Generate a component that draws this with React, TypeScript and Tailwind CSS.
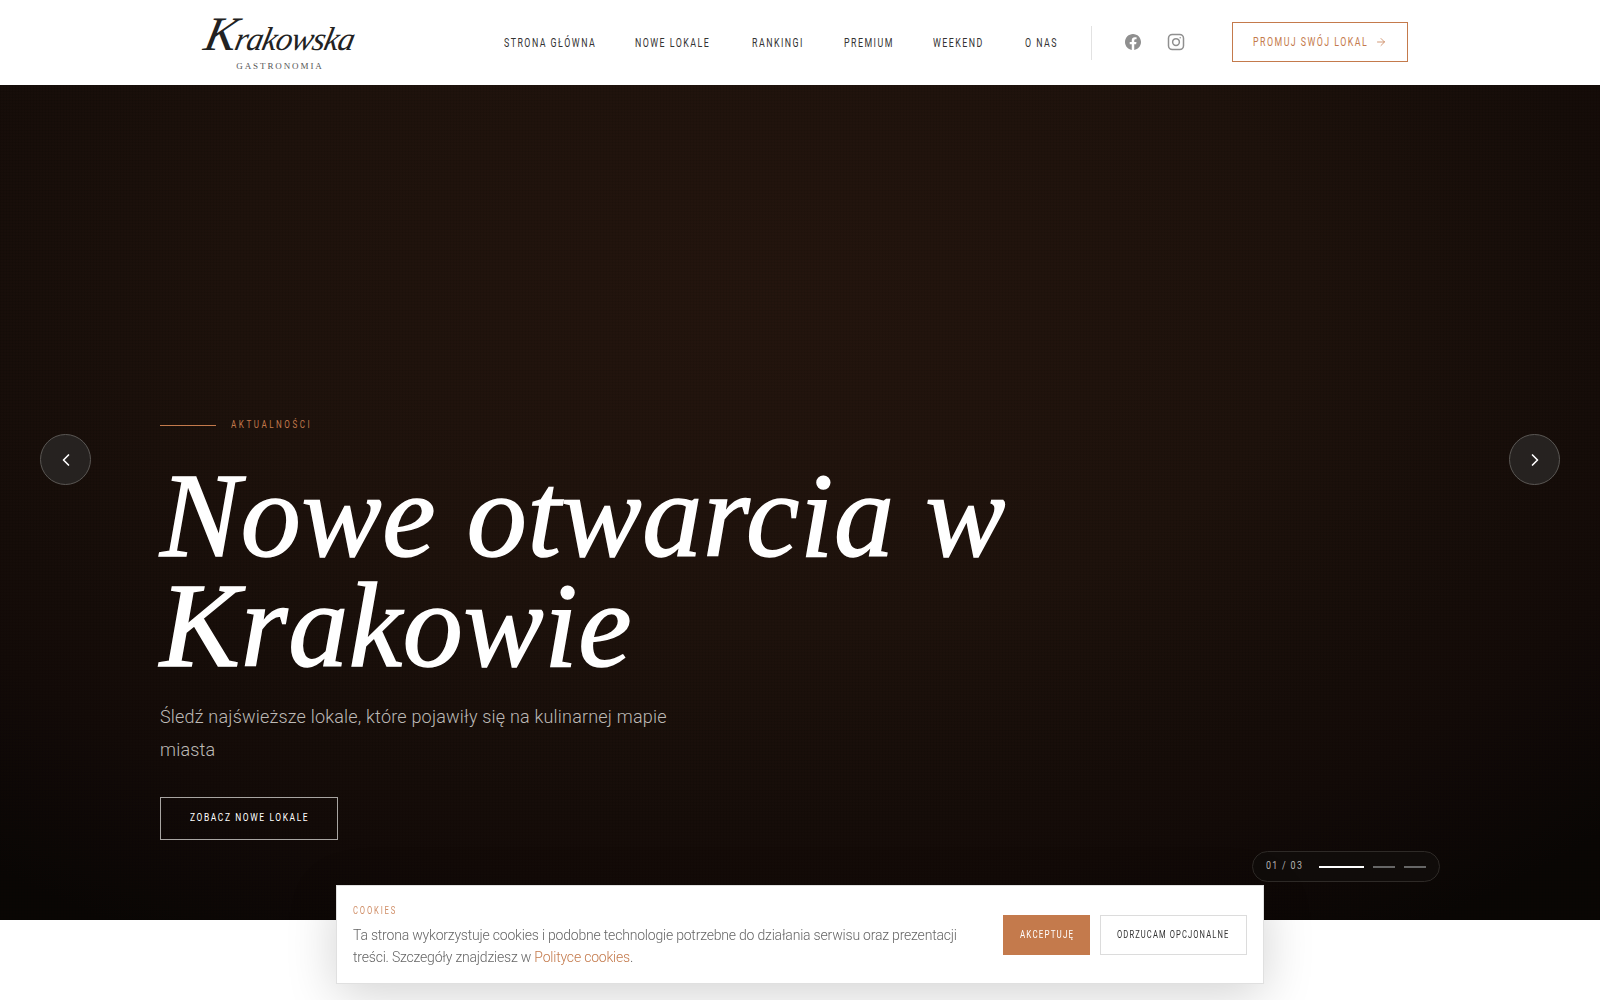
import { ArrowRight, ChevronLeft, ChevronRight } from 'lucide-react'

// no condensed face is installed, so Roboto gets squeezed horizontally
const narrow = "block origin-left font-['Roboto',sans-serif] whitespace-nowrap"

const navItems = [
  { label: 'STRONA GŁÓWNA', width: 'w-[91px]' },
  { label: 'NOWE LOKALE', width: 'w-[77px]' },
  { label: 'RANKINGI', width: 'w-[52px]' },
  { label: 'PREMIUM', width: 'w-[49px]' },
  { label: 'WEEKEND', width: 'w-[52px]' },
  { label: 'O NAS', width: 'w-[32px]' },
]

function Header() {
  return (
    <header className="flex h-[85px] items-center bg-white">
      <div className="ml-[200px] flex w-[160px] flex-col items-center">
        <span className="-skew-x-12 font-['Liberation_Serif',serif] text-[33px] leading-[40px] tracking-[-1px] text-[#222] italic">
          <span className="text-[48px] leading-[40px]">K</span>rakowska
        </span>
        <span className="mt-[2px] font-['Liberation_Serif',serif] text-[9px] leading-[10px] tracking-[1.9px] text-[#555]">
          GASTRONOMIA
        </span>
      </div>
      <nav className="ml-[144px] flex items-center gap-[40px]">
        {navItems.map((item) => (
          <a
            key={item.label}
            className={`${item.width} ${narrow} scale-x-[0.735] text-[12px] leading-[16px] tracking-[2px] text-[#333]`}
          >
            {item.label}
          </a>
        ))}
      </nav>
      <div className="ml-[34px] h-[34px] w-px bg-[#e2e2e2]" />
      <div className="ml-[33px] flex -translate-y-px items-center gap-[26px]">
        <svg viewBox="0 0 24 24" className="h-[16px] w-[16px] fill-[#8f8f8f]">
          <path d="M24 12.07C24 5.4 18.63 0 12 0S0 5.4 0 12.07c0 6.03 4.39 11.02 10.13 11.93v-8.44H7.08v-3.49h3.05V9.41c0-3.02 1.79-4.69 4.53-4.69 1.31 0 2.68.24 2.68.24v2.97h-1.51c-1.49 0-1.96.93-1.96 1.89v2.25h3.33l-.53 3.49h-2.8V24C19.61 23.09 24 18.1 24 12.07z" />
        </svg>
        <svg viewBox="0 0 24 24" className="h-[18px] w-[18px] fill-none stroke-[#8f8f8f] stroke-2">
          <rect x="2" y="2" width="20" height="20" rx="5" />
          <circle cx="12" cy="12" r="4.5" />
          <circle cx="17.6" cy="6.4" r="1" className="fill-[#8f8f8f] stroke-0" />
        </svg>
      </div>
      <a className="mt-[-1px] ml-[47px] flex h-[40px] w-[176px] items-center justify-center gap-[6px] border border-[#c47a4c] text-[#c47a4c]">
        <span className={`${narrow} w-[116px] scale-x-[0.735] text-[12px] tracking-[2px]`}>PROMUJ SWÓJ LOKAL</span>
        <ArrowRight size={12} strokeWidth={1.5} />
      </a>
    </header>
  )
}

function Hero() {
  return (
    <section className="relative flex h-[835px] flex-col justify-end bg-[#0d0806] bg-[linear-gradient(rgba(0,0,0,0.07)_1px,transparent_1px),linear-gradient(90deg,rgba(0,0,0,0.07)_1px,transparent_1px),radial-gradient(ellipse_75%_90%_at_48%_25%,#24150e_0%,#1e120c_45%,#130b08_80%,#0a0604_100%)] [background-size:3px_3px,3px_3px,100%_100%] pb-[80px] pl-[160px]">
      <div className="flex items-center gap-[15px]">
        <div className="h-px w-[56px] bg-[#c47a4c]" />
        <span className={`${narrow} w-[81px] scale-x-[0.73] text-[11px] leading-[14px] tracking-[3.5px] text-[#c47a4c]`}>
          AKTUALNOŚCI
        </span>
      </div>
      <h1 className="mt-[29px] w-[900px] font-['Liberation_Serif',serif] text-[120px] leading-[110px] font-normal tracking-[0.7px] text-white italic [-webkit-text-stroke:1.5px_white]">
        Nowe otwarcia w Krakowie
      </h1>
      <p className="mt-[19px] w-[520px] font-['Roboto',sans-serif] text-[18px] leading-[33px] font-light tracking-[0.2px] text-[#bdb9b6]">
        Śledź najświeższe lokale, które pojawiły się na kulinarnej mapie miasta
      </p>
      <a className="mt-[31px] flex h-[43px] w-[178px] items-center justify-center border border-[#a8a5a2] text-white">
        <span className={`${narrow} w-[119px] scale-x-[0.765] text-[11px] tracking-[2.1px]`}>ZOBACZ NOWE LOKALE</span>
      </a>

      <button className="absolute top-[349px] left-[40px] flex h-[51px] w-[51px] items-center justify-center rounded-full border border-[#5a5754] bg-[#262220] text-white">
        <ChevronLeft size={20} strokeWidth={2} />
      </button>
      <button className="absolute top-[349px] right-[40px] flex h-[51px] w-[51px] items-center justify-center rounded-full border border-[#5a5754] bg-[#262220] text-white">
        <ChevronRight size={20} strokeWidth={2} />
      </button>

      <div className="absolute top-[766px] left-[1252px] flex h-[31px] w-[188px] items-center rounded-full border border-[#2e2a27] bg-[#100c0a] pl-[13px]">
        <span className={`${narrow} w-[53px] scale-x-[0.81] text-[11px] tracking-[1.6px] text-[#b5b2b0]`}>01 / 03</span>
        <div className="flex items-center gap-[9px]">
          <div className="h-[2px] w-[45px] bg-white" />
          <div className="h-[2px] w-[22px] bg-[#666]" />
          <div className="h-[2px] w-[22px] bg-[#666]" />
        </div>
      </div>
    </section>
  )
}

function CookieBar() {
  return (
    <div className="fixed top-[885px] left-[336px] flex h-[99px] w-[928px] items-center border border-[#e0e0e0] bg-white pr-[16px] pl-[16px] shadow-[0_10px_50px_rgba(0,0,0,0.18)]">
      <div className="w-[630px] pt-[3px]">
        <div className={`${narrow} w-[44px] scale-x-[0.765] text-[10px] leading-[14px] tracking-[2.4px] text-[#d08f68]`}>
          COOKIES
        </div>
        <p className="mt-[6px] font-['Roboto',sans-serif] text-[14px] leading-[22px] font-light tracking-[-0.2px] text-[#666]">
          Ta strona wykorzystuje cookies i podobne technologie potrzebne do działania serwisu oraz prezentacji treści.
          Szczegóły znajdziesz w <a className="text-[#c47a4c]">Polityce cookies</a>.
        </p>
      </div>
      <button className="ml-auto flex h-[40px] w-[87px] items-center justify-center bg-[#c47a4c] pt-[2px] text-white">
        <span className={`${narrow} w-[54px] scale-x-[0.725] text-[11px] tracking-[1.6px]`}>AKCEPTUJĘ</span>
      </button>
      <button className="ml-[10px] flex h-[40px] w-[147px] items-center justify-center border border-[#dcdcdc] pt-[2px] text-[#333]">
        <span className={`${narrow} w-[114px] scale-x-[0.69] text-[11px] tracking-[1.6px]`}>ODRZUCAM OPCJONALNE</span>
      </button>
    </div>
  )
}

export default function App() {
  return (
    <div className="h-[1000px] overflow-hidden bg-white">
      <Header />
      <Hero />
      <CookieBar />
    </div>
  )
}
